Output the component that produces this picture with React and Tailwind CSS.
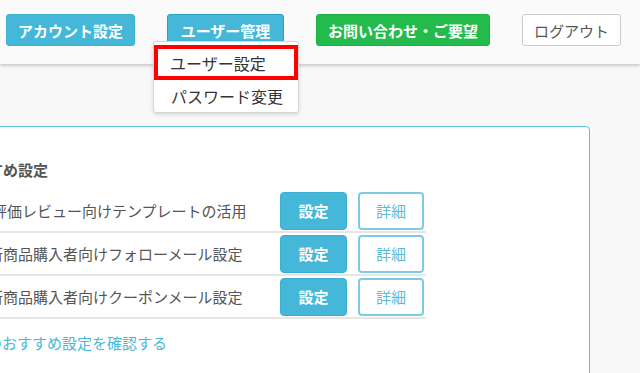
export default function App() {
  const rows = [
    { pre: "高", text: "評価レビュー向けテンプレートの活用", ml: "ml-[19px]" },
    { pre: "新", text: "商品購入者向けフォローメール設定", ml: "ml-[30px]" },
    { pre: "新", text: "商品購入者向けクーポンメール設定", ml: "ml-[30px]" },
  ];
  return (
    <div
      className="relative w-[640px] h-[373px] overflow-hidden bg-[#f8f8f8]"
      style={{ fontFamily: '"Noto Sans CJK JP", "Noto Sans", sans-serif' }}
    >
      <header className="relative z-10 h-16 bg-[#fafafa] shadow-[0_2px_3px_rgba(0,0,0,0.18)] flex items-start gap-8 pl-[6px] pt-[14px]">
        <button className="h-8 px-[11px] rounded-[3px] bg-[#45b8da] border border-[#3fb2d3] text-white text-[15px] font-bold leading-none flex items-center">
          アカウント設定
        </button>
        <div className="relative">
          <button className="h-8 w-[117px] justify-center rounded-[3px] bg-[#45b8da] border border-[#2f9fc4] text-white text-[15px] font-bold leading-none flex items-center">
            ユーザー管理
          </button>
          <div className="absolute top-[27px] left-[-14px] w-[146px] bg-white border border-[#d6d6d6] rounded-[3px] shadow-[0_2px_4px_rgba(0,0,0,0.12)] pt-[3px] pb-[1px]">
            <div className="h-[35px] border-4 border-[#ff0000] flex items-center pl-[12px] text-[16px] text-[#333]">
              ユーザー設定
            </div>
            <div className="h-[31px] flex items-center pl-[17px] text-[16px] text-[#333]">
              パスワード変更
            </div>
          </div>
        </div>
        <button className="h-8 px-[11px] rounded-[3px] bg-[#22bb4c] border border-[#1fb046] text-white text-[15px] font-bold leading-none flex items-center">
          お問い合わせ・ご要望
        </button>
        <button className="h-8 px-[11px] rounded-[3px] bg-white border border-[#cccccc] text-[#555] text-[15px] leading-none flex items-center">
          ログアウト
        </button>
      </header>
      <main className="pt-[62px]">
        <div className="ml-[-60px] w-[650px] h-[400px] bg-white border border-[#5bc0de] rounded-[4px] px-[17px] pt-[32px]">
          <h2 className="h-[22px] leading-[22px] text-[15px] font-bold text-[#555]">おすすめ設定</h2>
          <div className="mt-[9px] w-[468px]">
            {rows.map((r, i) => (
              <div key={i} className="flex items-center pt-[2px] pb-[1px] border-b-2 border-[#e6e6e6]">
                <span className={`${r.ml} text-[15px] text-[#555] whitespace-nowrap`}>
                  {r.pre}
                  {r.text}
                </span>
                <button className="ml-auto w-[67px] h-[38px] rounded-[4px] bg-[#45b8da] border border-[#3aafd2] text-white text-[15px] font-bold flex items-center justify-center">
                  設定
                </button>
                <button className="ml-[11px] mr-[2px] w-[66px] h-[38px] rounded-[4px] bg-white border-2 border-[#7ccbe2] text-[#5bbcda] text-[15px] flex items-center justify-center">
                  詳細
                </button>
              </div>
            ))}
          </div>
          <div className="mt-[13px] ml-[14px] h-[22px] leading-[22px] text-[15px] text-[#46b8da]">
            他のおすすめ設定を確認する
          </div>
        </div>
      </main>
    </div>
  );
}
